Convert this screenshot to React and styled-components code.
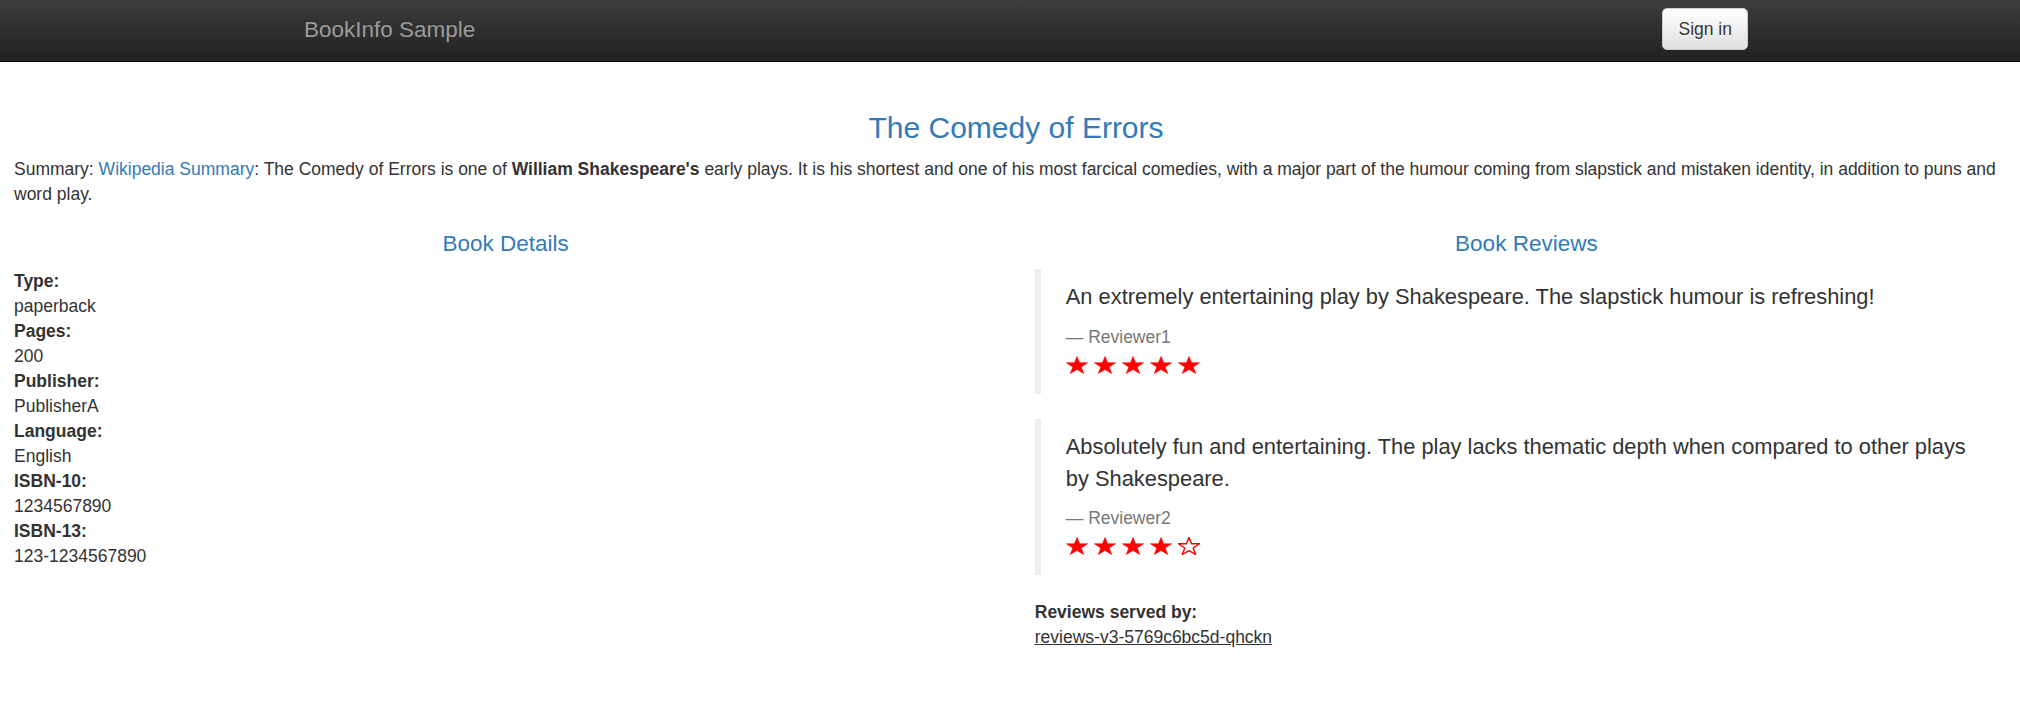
import React from "react";
import styled, { createGlobalStyle } from "styled-components";

const GlobalStyle = createGlobalStyle`
  html, body {
    margin: 0;
    padding: 0;
    background: #fff;
  }
  body {
    font-family: "Liberation Sans", Arial, Helvetica, sans-serif;
    font-size: 17.5px;
    line-height: 25px;
    color: #333;
  }
`;

const Navbar = styled.nav`
  height: 61px;
  border-bottom: 1px solid #080808;
  background-image: linear-gradient(to bottom, #3c3c3c 0%, #222 100%);
`;

const NavContainer = styled.div`
  width: 1444px;
  margin-left: 304px;
  display: flex;
  justify-content: space-between;
  align-items: flex-start;
`;

const Brand = styled.a`
  padding-top: 16.5px;
  font-size: 22.5px;
  line-height: 25px;
  color: #9d9d9d;
  text-decoration: none;
  text-shadow: 0 -1px 0 rgba(0, 0, 0, 0.25);
`;

const SignIn = styled.button`
  margin-top: 8px;
  height: 42px;
  padding: 0 15px;
  font-family: inherit;
  font-size: 17.5px;
  line-height: 25px;
  color: #333;
  border: 1px solid #ccc;
  border-radius: 5px;
  background-image: linear-gradient(to bottom, #fff 0%, #e0e0e0 100%);
  text-shadow: 0 1px 0 #fff;
  box-shadow: inset 0 1px 0 rgba(255, 255, 255, 0.15), 0 1px 1px rgba(0, 0, 0, 0.075);
  cursor: pointer;
`;

const Page = styled.main`
  padding: 24px 2px 0 14px;
`;

const Title = styled.h3`
  margin: 25px 0 12.5px;
  font-size: 30px;
  line-height: 33px;
  font-weight: normal;
  text-align: center;
  color: #337ab7;
`;

const Summary = styled.p`
  margin: 0 0 12.5px;
`;

const Link = styled.a`
  color: #337ab7;
  text-decoration: none;
`;

const Columns = styled.div`
  display: grid;
  grid-template-columns: 1fr 1fr;
  column-gap: 37.5px;
`;

const Column = styled.section``;

const ColumnTitle = styled.h4`
  margin: 12.5px 0;
  font-size: 22.5px;
  line-height: 24.75px;
  font-weight: normal;
  text-align: center;
  color: #337ab7;
`;

const DetailList = styled.dl`
  margin: 0 0 25px;
`;

const Term = styled.dt`
  font-weight: bold;
`;

const Value = styled.dd`
  margin: 0;
`;

const Quote = styled.blockquote`
  margin: 0 0 25px;
  padding: 12.5px 25px;
  border-left: 6.25px solid #eee;
  font-size: 21.875px;
  line-height: 31.25px;
`;

const QuoteText = styled.p`
  margin: 0 0 12.5px;
`;

const Reviewer = styled.small`
  display: block;
  font-size: 17.5px;
  line-height: 25px;
  color: #777;
`;

const Stars = styled.div`
  display: flex;
  align-items: flex-start;
  gap: 6px;
  height: 31.25px;
  padding-top: 5.5px;
  box-sizing: border-box;
`;

const Served = styled.u`
  color: #333;
`;

const Star = ({ filled }) => (
  <svg width="22" height="18" viewBox="0 0 22 18">
    <polygon
      points="11,0.4 13.6,6.8 21.6,6.8 15.2,11 17.7,17.5 11,13.6 4.3,17.5 6.8,11 0.4,6.8 8.4,6.8"
      fill={filled ? "#ff0000" : "none"}
      stroke="#ff0000"
      strokeWidth={filled ? 0.6 : 1.4}
      strokeLinejoin="miter"
    />
  </svg>
);

const details = [
  ["Type:", "paperback"],
  ["Pages:", "200"],
  ["Publisher:", "PublisherA"],
  ["Language:", "English"],
  ["ISBN-10:", "1234567890"],
  ["ISBN-13:", "123-1234567890"],
];

const reviews = [
  {
    text: "An extremely entertaining play by Shakespeare. The slapstick humour is refreshing!",
    name: "Reviewer1",
    rating: 5,
  },
  {
    text: "Absolutely fun and entertaining. The play lacks thematic depth when compared to other plays by Shakespeare.",
    name: "Reviewer2",
    rating: 4,
  },
];

const App = () => {
  return (
    <>
      <GlobalStyle />
      <Navbar>
        <NavContainer>
          <Brand href="#">BookInfo Sample</Brand>
          <SignIn type="button">Sign in</SignIn>
        </NavContainer>
      </Navbar>
      <Page>
        <Title>The Comedy of Errors</Title>
        <Summary>
          Summary: <Link href="#">Wikipedia Summary</Link>: The Comedy of Errors is one of{" "}
          <b>William Shakespeare's</b> early plays. It is his shortest and one of his most
          farcical comedies, with a major part of the humour coming from slapstick and mistaken
          identity, in addition to puns and word play.
        </Summary>
        <Columns>
          <Column>
            <ColumnTitle>Book Details</ColumnTitle>
            <DetailList>
              {details.map(([term, value]) => (
                <React.Fragment key={term}>
                  <Term>{term}</Term>
                  <Value>{value}</Value>
                </React.Fragment>
              ))}
            </DetailList>
          </Column>
          <Column>
            <ColumnTitle>Book Reviews</ColumnTitle>
            {reviews.map((r) => (
              <Quote key={r.name}>
                <QuoteText>{r.text}</QuoteText>
                <Reviewer>{"\u2014\u00A0"}{r.name}</Reviewer>
                <Stars>
                  {[1, 2, 3, 4, 5].map((n) => (
                    <Star key={n} filled={n <= r.rating} />
                  ))}
                </Stars>
              </Quote>
            ))}
            <DetailList>
              <Term>Reviews served by:</Term>
              <Value>
                <Served>reviews-v3-5769c6bc5d-qhckn</Served>
              </Value>
            </DetailList>
          </Column>
        </Columns>
      </Page>
    </>
  );
};

export default App;
